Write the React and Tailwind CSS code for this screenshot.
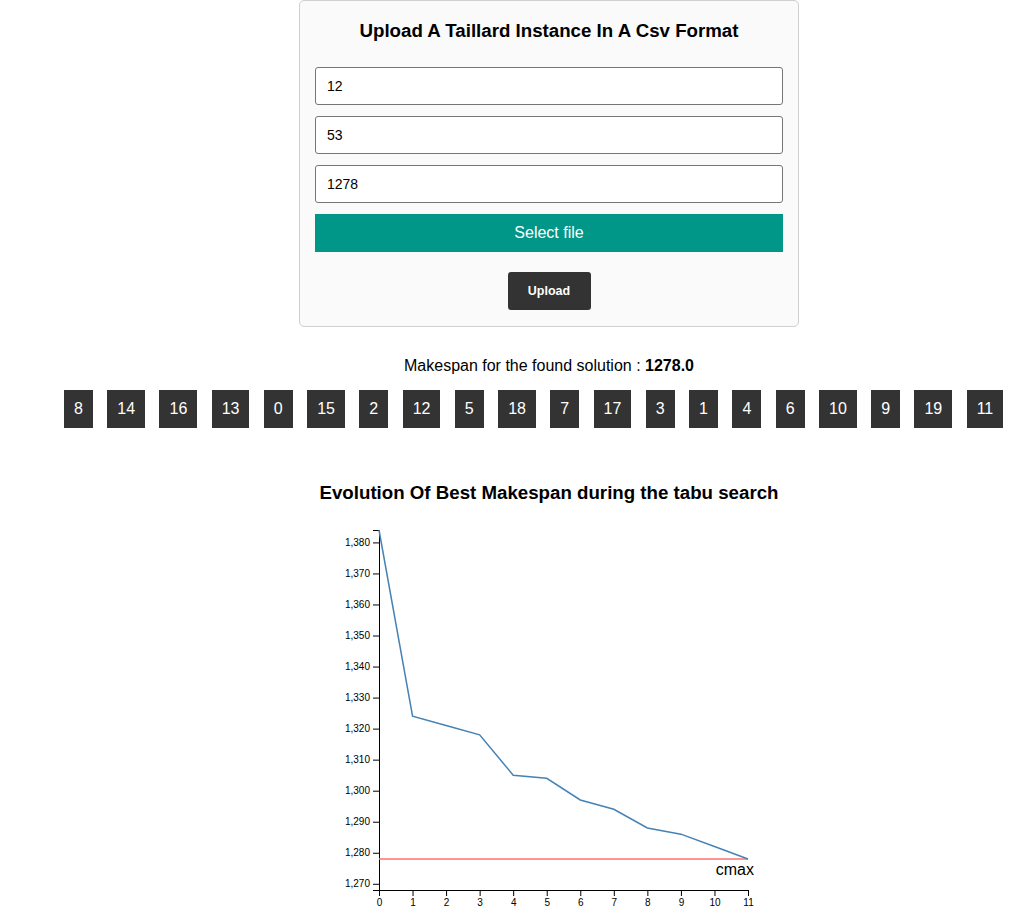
import React from 'react'

const sequence = [8, 14, 16, 13, 0, 15, 2, 12, 5, 18, 7, 17, 3, 1, 4, 6, 10, 9, 19, 11]
const history = [1384, 1324, 1321, 1318, 1305, 1304, 1297, 1294, 1288, 1286, 1282, 1278]
const cmax = 1278

// chart geometry (d3-like)
const M = { left: 50, top: 10 }
const W = 369
const H = 360
const yMin = 1268
const yMax = 1384
const sx = (i) => (i / (history.length - 1)) * W
const sy = (v) => ((yMax - v) / (yMax - yMin)) * H

function Chart() {
  const yTicks = []
  for (let v = 1270; v <= 1380; v += 10) yTicks.push(v)
  const line = history.map((v, i) => `${i === 0 ? 'M' : 'L'}${sx(i)},${sy(v)}`).join('')

  return (
    <svg width="440" height="395" className="block">
      <g transform={`translate(${M.left},${M.top})`} fontFamily="'Liberation Sans', Arial, sans-serif" fontSize="10">
        {/* y axis */}
        <path d={`M-6,0.5H0.5V${H + 0.5}H-6`} fill="none" stroke="#000" />
        {yTicks.map((v) => (
          <g key={v} transform={`translate(0,${sy(v) + 0.5})`}>
            <line x2="-6" stroke="#000" />
            <text x="-9" dy="0.32em" textAnchor="end" fill="#000">
              {v.toLocaleString('en-US')}
            </text>
          </g>
        ))}
        {/* x axis */}
        <g transform={`translate(0,${H})`}>
          <path d={`M0.5,6V0.5H${W + 0.5}V6`} fill="none" stroke="#000" />
          {history.map((_, i) => (
            <g key={i} transform={`translate(${sx(i) + 0.5},0)`}>
              <line y2="6" stroke="#000" />
              <text y="9" dy="0.71em" textAnchor="middle" fill="#000">{i}</text>
            </g>
          ))}
        </g>
        <line x1="0" x2={W} y1={sy(cmax)} y2={sy(cmax)} stroke="#ff6f6f" strokeWidth="1.5" />
        <path d={line} fill="none" stroke="steelblue" strokeWidth="1.5" />
        <text x={W + 6} y={sy(cmax) + 16} textAnchor="end" fontSize="16" fill="#000">cmax</text>
      </g>
    </svg>
  )
}

export default function App() {
  return (
    <div className="min-h-screen bg-white text-black font-['Liberation_Sans',Arial,sans-serif]">
      <div className="flex flex-col items-center pl-[63px]">
        {/* upload card */}
        <div className="w-[500px] border border-[#cfcfcf] rounded-[5px] bg-[#fafafa] px-[15px] pt-[18px] pb-[16px]">
          <h3 className="text-center text-[18.7px] leading-[23px] font-bold mb-[25px]">
            Upload A Taillard Instance In A Csv Format
          </h3>
          <div className="flex flex-col gap-[11px]">
            {['12', '53', '1278'].map((v) => (
              <input
                key={v}
                readOnly
                value={v}
                className="h-[38px] w-full border border-[#767676] rounded-[3px] bg-white px-[11px] text-[14px] outline-none"
              />
            ))}
            <div className="h-[38px] bg-[#009688] text-white text-[16px] flex items-center justify-center">
              Select file
            </div>
          </div>
          <div className="flex justify-center mt-[20px]">
            <button className="w-[83px] h-[38px] bg-[#333] rounded-[3px] text-white font-bold text-[12.5px]">
              Upload
            </button>
          </div>
        </div>

        <p className="mt-[30px] text-[16px] leading-[18px]">
          Makespan for the found solution : <b>1278.0</b>
        </p>
      </div>

      {/* job sequence */}
      <div className="flex gap-[14.4px] pl-[64px] mt-[15px]">
        {sequence.map((n) => (
          <div key={n} className="h-[38px] px-[10px] bg-[#333] text-white text-[16px] flex items-center">
            {n}
          </div>
        ))}
      </div>

      <div className="flex flex-col items-center pl-[63px]">
        <h3 className="mt-[54px] text-[18.7px] leading-[22px] font-bold">
          Evolution Of Best Makespan during the tabu search
        </h3>
        <div className="mt-[16px]">
          <Chart />
        </div>
      </div>
    </div>
  )
}
